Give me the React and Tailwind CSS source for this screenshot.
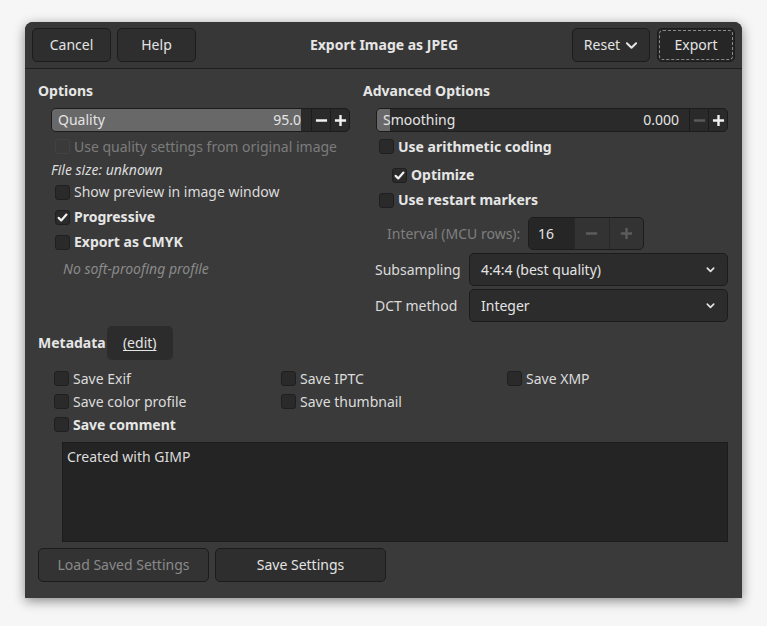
import React from "react";

const font = { fontFamily: '"Noto Sans", "Open Sans", sans-serif' };

function Check({ checked, disabled }) {
  return (
    <span
      className={`flex h-[15px] w-[15px] shrink-0 items-center justify-center rounded-[3px] border ${
        disabled ? "border-[#424242] bg-[#3a3a3a]" : "border-[#1f1f1f] bg-[#2a2a2a]"
      }`}
    >
      {checked && (
        <svg width="11" height="11" viewBox="0 0 12 12">
          <path d="M1.8 6.4 L4.6 9.2 L10.3 2.8" fill="none" stroke="#f0f0f0" strokeWidth="2.4" strokeLinecap="round" strokeLinejoin="round" />
        </svg>
      )}
    </span>
  );
}

function CheckRow({ label, checked, bold, disabled, className = "" }) {
  return (
    <div className={`flex items-center gap-[4px] ${className}`}>
      <Check checked={checked} disabled={disabled} />
      <span className={`${bold ? "font-bold text-[#e6e6e6]" : disabled ? "text-[#7c7c7c]" : "text-[#dcdcdc]"}`}>{label}</span>
    </div>
  );
}

function Minus({ color = "#f0f0f0" }) {
  return (
    <svg width="13" height="13" viewBox="0 0 14 14">
      <path d="M1 7 H13" stroke={color} strokeWidth="2.6" />
    </svg>
  );
}

function Plus({ color = "#f0f0f0" }) {
  return (
    <svg width="13" height="13" viewBox="0 0 14 14">
      <path d="M1 7 H13 M7 1 V13" stroke={color} strokeWidth="2.6" />
    </svg>
  );
}

function Slider({ label, value, fill, width, minusDisabled }) {
  return (
    <div
      className="flex h-[24px] overflow-hidden rounded-[5px] border border-[#1c1c1c] bg-[#2a2a2a]"
      style={{ width }}
    >
      <div className="relative flex flex-1 items-center">
        <div className="absolute inset-y-0 left-0 bg-[#686868]" style={{ width: fill }} />
        <span className="relative pl-[6px] text-[#e4e4e4]">{label}</span>
        <span className="relative ml-auto pr-[10px] text-[#e4e4e4]">{value}</span>
      </div>
      <div className="flex w-[19px] items-center justify-center border-l border-[#1c1c1c]">
        <Minus color={minusDisabled ? "#5a5a5a" : "#f0f0f0"} />
      </div>
      <div className="flex w-[19px] items-center justify-center border-l border-[#1c1c1c]">
        <Plus />
      </div>
    </div>
  );
}

function Combo({ value }) {
  return (
    <div className="flex h-[33px] w-[259px] items-center rounded-[5px] border border-[#1c1c1c] bg-[#2c2c2c] pl-[11px] pr-[11px] text-[#e4e4e4]">
      <span>{value}</span>
      <svg className="ml-auto" width="11" height="11" viewBox="0 0 12 12">
        <path d="M2.5 4.5 L6 8 L9.5 4.5" fill="none" stroke="#e4e4e4" strokeWidth="1.8" strokeLinecap="round" strokeLinejoin="round" />
      </svg>
    </div>
  );
}

function Btn({ children, className = "", dim }) {
  return (
    <div
      className={`flex items-center justify-center rounded-[5px] border border-[#1c1c1c] ${
        dim ? "bg-[#333333] text-[#8a8a8a]" : "bg-[#2e2e2e] text-[#e4e4e4]"
      } ${className}`}
    >
      {children}
    </div>
  );
}

export default function App() {
  return (
    <div className="min-h-[626px] w-[767px] bg-[#f6f6f6] pt-[22px] text-[14px] leading-none" style={font}>
      <div className="ml-[25px] h-[576px] w-[717px] overflow-hidden rounded-t-[8px] bg-[#3a3a3a] shadow-[0_3px_12px_rgba(0,0,0,0.45)]">
        {/* header */}
        <div className="flex h-[47px] items-center border-b border-[#1f1f1f] bg-[#373737] px-[7px]">
          <Btn className="h-[34px] w-[79px]">Cancel</Btn>
          <Btn className="ml-[6px] h-[34px] w-[79px]">Help</Btn>
          <div className="flex-1 text-center font-bold text-[#e6e6e6]">Export Image as JPEG</div>
          <Btn className="h-[34px] w-[78px] gap-[5px]">
            Reset
            <svg width="13" height="11" viewBox="0 0 14 12">
              <path d="M2 3.5 L7 8.5 L12 3.5" fill="none" stroke="#e4e4e4" strokeWidth="2.2" strokeLinecap="round" strokeLinejoin="round" />
            </svg>
          </Btn>
          <div className="ml-[7px] flex h-[34px] w-[78px] items-center justify-center rounded-[5px] border border-[#1c1c1c] bg-[#262626] p-[1px] text-[#e4e4e4]">
            <div className="flex h-full w-full items-center justify-center rounded-[4px] border border-dashed border-[#8a8a8a]">Export</div>
          </div>
        </div>

        {/* body */}
        <div className="pl-[13px] pr-[14px] pt-[11px]">
          <div className="flex">
            {/* left */}
            <div className="w-[325px]">
              <div className="flex h-[22px] items-center font-bold text-[#e6e6e6]">Options</div>
              <div className="ml-[13px] mt-[6px]">
                <Slider label="Quality" value="95.0" fill="249px" width="299px" />
              </div>
              <CheckRow className="ml-[17px] mt-[3px] h-[23px]" label="Use quality settings from original image" disabled />
              <div className="ml-[13px] flex h-[23px] items-center italic text-[#dcdcdc]">File size: unknown</div>
              <CheckRow className="ml-[17px] h-[22px]" label="Show preview in image window" />
              <CheckRow className="ml-[17px] mt-[3px] h-[22px]" label="Progressive" checked bold />
              <CheckRow className="ml-[17px] mt-[3px] h-[22px]" label="Export as CMYK" bold />
              <div className="ml-[25px] mt-[5px] flex h-[22px] items-center italic text-[#8a8a8a]">No soft-proofing profile</div>
            </div>

            {/* right */}
            <div className="w-[365px]">
              <div className="flex h-[22px] items-center font-bold text-[#e6e6e6]">Advanced Options</div>
              <div className="ml-[13px] mt-[6px]">
                <Slider label="Smoothing" value="0.000" fill="13px" width="352px" minusDisabled />
              </div>
              <CheckRow className="ml-[16px] mt-[3px] h-[23px]" label="Use arithmetic coding" bold />
              <CheckRow className="ml-[29px] mt-[6px] h-[22px]" label="Optimize" checked bold />
              <CheckRow className="ml-[16px] mt-[3px] h-[22px]" label="Use restart markers" bold />
              <div className="mt-[6px] flex h-[33px] items-center">
                <span className="ml-[24px] text-[#7f7f7f]">Interval (MCU rows):</span>
                <div className="ml-auto mr-[84px] flex h-[33px] w-[116px] overflow-hidden rounded-[5px] border border-[#1c1c1c] bg-[#333333]">
                  <div className="flex w-[45px] items-center bg-[#262626] pl-[9px] text-[#e4e4e4]">16</div>
                  <div className="flex flex-1 items-center justify-center border-l border-[#282828]">
                    <Minus color="#5c5c5c" />
                  </div>
                  <div className="flex flex-1 items-center justify-center border-l border-[#282828]">
                    <Plus color="#5c5c5c" />
                  </div>
                </div>
              </div>
              <div className="mt-[3px] flex items-center">
                <span className="w-[106px] pl-[12px] text-[#dcdcdc]">Subsampling</span>
                <Combo value="4:4:4 (best quality)" />
              </div>
              <div className="mt-[3px] flex items-center">
                <span className="w-[106px] pl-[12px] text-[#dcdcdc]">DCT method</span>
                <Combo value="Integer" />
              </div>
            </div>
          </div>

          {/* metadata */}
          <div className="mt-[4px] flex h-[34px] items-center">
            <span className="font-bold text-[#e6e6e6]">Metadata</span>
            <div className="ml-[1px] flex h-[34px] w-[66px] items-center justify-center rounded-[5px] bg-[#2c2c2c] text-[#e4e4e4] underline underline-offset-2">
              (edit)
            </div>
          </div>
          <div className="mt-[7px] grid grid-cols-[227px_226px_1fr] pl-[16px]">
            <CheckRow className="h-[23px]" label="Save Exif" />
            <CheckRow className="h-[23px]" label="Save IPTC" />
            <CheckRow className="h-[23px]" label="Save XMP" />
            <CheckRow className="h-[23px]" label="Save color profile" />
            <CheckRow className="h-[23px]" label="Save thumbnail" />
            <div />
            <CheckRow className="h-[23px]" label="Save comment" bold />
          </div>
          <div className="ml-[24px] mt-[6px] h-[100px] border border-[#1c1c1c] bg-[#242424] px-[4px] pt-[7px] text-[#dcdcdc]">
            Created with GIMP
          </div>
          <div className="mt-[6px] flex gap-[6px]">
            <Btn className="h-[34px] w-[171px]" dim>Load Saved Settings</Btn>
            <Btn className="h-[34px] w-[171px]">Save Settings</Btn>
          </div>
        </div>
      </div>
    </div>
  );
}
